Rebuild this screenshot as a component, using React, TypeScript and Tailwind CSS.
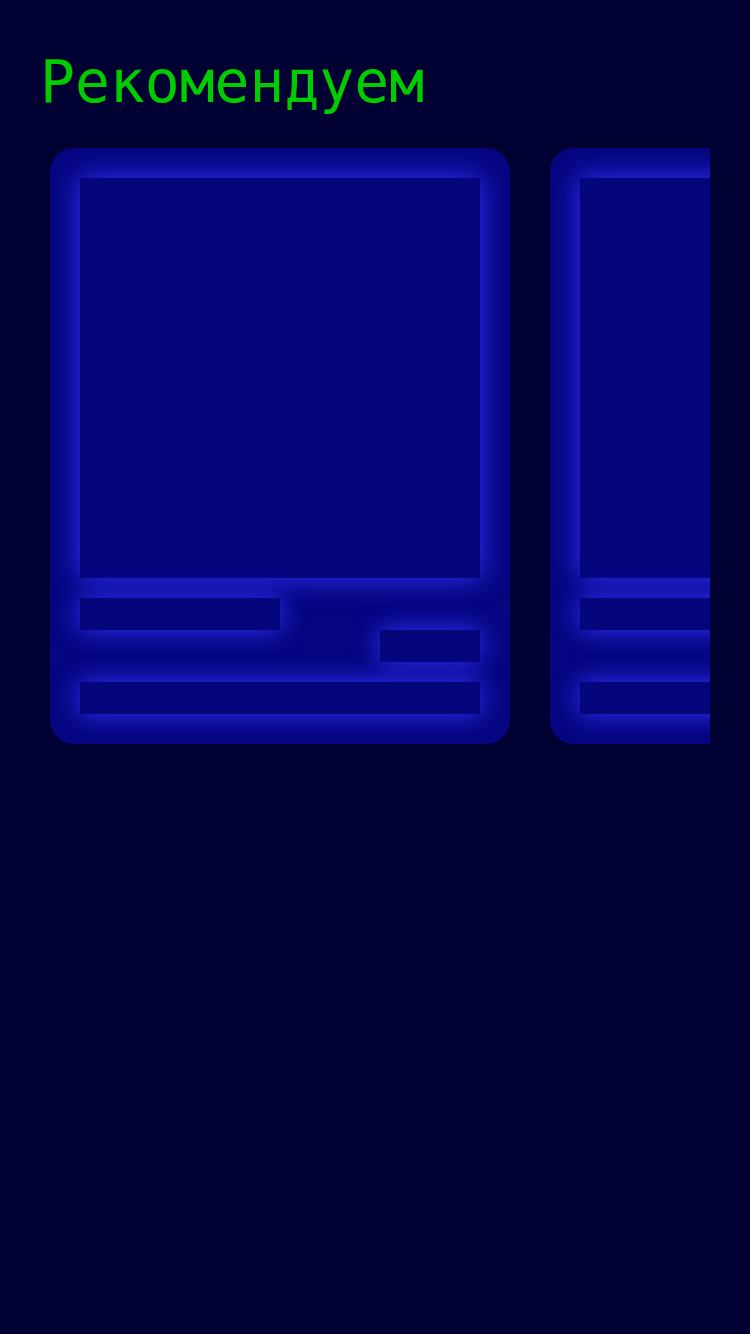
import React from "react";

const blk = "bg-[#05057c] shadow-[0_0_26px_#3333ff]";

function Card() {
  return (
    <div className="w-[460px] shrink-0 rounded-[24px] bg-[#060682] p-[30px] flex flex-col gap-5">
      <div className={`h-[400px] w-full ${blk}`} />
      <div className="flex justify-between h-16">
        <div className={`w-[200px] h-8 self-start ${blk}`} />
        <div className={`w-[100px] h-8 self-end ${blk}`} />
      </div>
      <div className={`h-8 w-full ${blk}`} />
    </div>
  );
}

export default function App() {
  return (
    <div className="min-h-[1334px] w-[750px] bg-[#000033]">
      <div className="px-10 pt-[47px]">
        <h1
          className="text-[58px] leading-[70px] text-[#00cc00]"
          style={{ fontFamily: '"DejaVu Sans Mono", monospace' }}
        >
          Рекомендуем
        </h1>
      </div>
      <div className="mx-10 mt-[31px] overflow-hidden">
        <div className="flex gap-10 pl-[10px]">
          <Card />
          <Card />
        </div>
      </div>
    </div>
  );
}
